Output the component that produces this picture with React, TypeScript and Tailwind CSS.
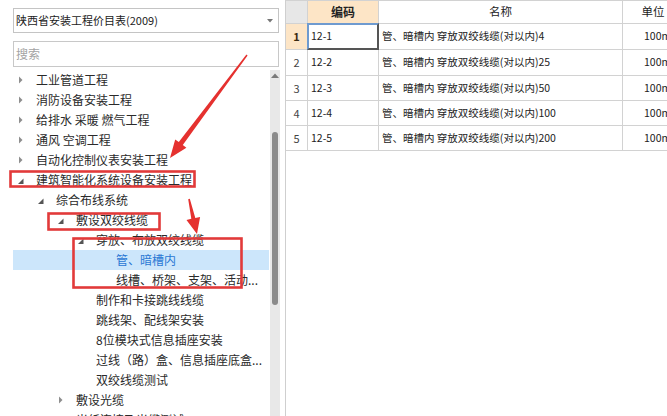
import React from "react";

type Node = {
  text: string;
  level: number;
  state: "collapsed" | "expanded" | "leaf";
  selected?: boolean;
};

const nodes: Node[] = [
  { text: "工业管道工程", level: 0, state: "collapsed" },
  { text: "消防设备安装工程", level: 0, state: "collapsed" },
  { text: "给排水 采暖 燃气工程", level: 0, state: "collapsed" },
  { text: "通风 空调工程", level: 0, state: "collapsed" },
  { text: "自动化控制仪表安装工程", level: 0, state: "collapsed" },
  { text: "建筑智能化系统设备安装工程", level: 0, state: "expanded" },
  { text: "综合布线系统", level: 1, state: "expanded" },
  { text: "敷设双绞线缆", level: 2, state: "expanded" },
  { text: "穿放、布放双绞线缆", level: 3, state: "expanded" },
  { text: "管、暗槽内", level: 4, state: "leaf", selected: true },
  { text: "线槽、桥架、支架、活动...", level: 4, state: "leaf" },
  { text: "制作和卡接跳线线缆", level: 3, state: "leaf" },
  { text: "跳线架、配线架安装", level: 3, state: "leaf" },
  { text: "8位模块式信息插座安装", level: 3, state: "leaf" },
  { text: "过线（路）盒、信息插座底盒...", level: 3, state: "leaf" },
  { text: "双绞线缆测试", level: 3, state: "leaf" },
  { text: "敷设光缆", level: 2, state: "collapsed" },
  { text: "光纤连接及光缆测试", level: 2, state: "leaf" },
];

const levelPad = ["pl-[3px]", "pl-[23px]", "pl-[43px]", "pl-[63px]", "pl-[83px]"];

function Arrow({ state }: { state: Node["state"] }) {
  if (state === "collapsed")
    return (
      <svg width="10" height="10" viewBox="0 0 10 10">
        <polygon points="3,1.5 6.5,5 3,8.5" fill="#8e8e8e" />
      </svg>
    );
  if (state === "expanded")
    return (
      <svg width="10" height="10" viewBox="0 0 10 10">
        <polygon points="7.5,3.5 7.5,9 2,9" fill="#555" />
      </svg>
    );
  return <span className="w-[10px]" />;
}

const rows = [
  { n: "1", code: "12-1", name: "管、暗槽内 穿放双绞线缆(对以内)4", h: "h-[26px]" },
  { n: "2", code: "12-2", name: "管、暗槽内 穿放双绞线缆(对以内)25", h: "h-[26px]" },
  { n: "3", code: "12-3", name: "管、暗槽内 穿放双绞线缆(对以内)50", h: "h-[25px]" },
  { n: "4", code: "12-4", name: "管、暗槽内 穿放双绞线缆(对以内)100", h: "h-[25px]" },
  { n: "5", code: "12-5", name: "管、暗槽内 穿放双绞线缆(对以内)200", h: "h-[25px]" },
];

export default function App() {
  return (
    <div className="relative w-[667px] h-[416px] overflow-hidden bg-white flex font-['Noto_Sans_CJK_SC',sans-serif] text-[#222]">
      {/* left panel */}
      <div className="w-[286px] h-full shrink-0 border-r border-[#cfcfcf] pl-[13px] pt-[8px] flex flex-col">
        <div className="w-[266px] h-[25px] border border-[#c4c4c4] flex items-center pl-[2px] pr-[5px] text-[11px] leading-none">
          <span className="flex-1">陕西省安装工程价目表(2009)</span>
          <svg width="6" height="4" viewBox="0 0 6 4">
            <polygon points="0,0 6,0 3,3.5" fill="#777" />
          </svg>
        </div>
        <div className="mt-[8px] w-[266px] h-[26px] border border-[#c8c8c8] flex items-center pl-[2px] text-[12px] leading-none text-[#a3a3a3]">
          搜索
        </div>
        <div className="mt-[3px] flex flex-1 min-h-0">
          <div className="w-[256px] flex flex-col overflow-hidden">
            {nodes.map((nd, i) => (
              <div
                key={i}
                className={`h-[20px] shrink-0 flex items-center text-[12px] leading-none whitespace-nowrap ${levelPad[nd.level]} ${
                  nd.selected ? "bg-[#cce6fb] text-[#2a78d4]" : "text-[#2a2a2a]"
                }`}
              >
                <span className="w-[10px] h-[10px] flex items-center justify-center">
                  <Arrow state={nd.state} />
                </span>
                <span className="ml-[10px]">{nd.text}</span>
              </div>
            ))}
          </div>
          <div className="ml-[1px] w-[10px] bg-[#e8e8e8] flex flex-col items-center">
            <svg className="mt-[3px]" width="8" height="5" viewBox="0 0 8 5">
              <polygon points="0,5 8,5 4,0.5" fill="#7a7a7a" />
            </svg>
            <div className="mt-[54px] w-[6px] h-[173px] rounded-[3px] bg-[#8b8b8b]" />
          </div>
        </div>
      </div>

      {/* grid */}
      <div className="flex-1 flex flex-col text-[10.5px] leading-none">
        <div className="flex h-[24px] border-t border-b border-[#d2d2d2] shrink-0">
          <div className="w-[22px] shrink-0 border-r border-[#d2d2d2] bg-[#e7e7e7]" />
          <div className="w-[71px] shrink-0 border-r border-[#d2d2d2] bg-[#fde5c6] flex items-center justify-center font-bold text-[12px]">
            编码
          </div>
          <div className="w-[244px] shrink-0 border-r border-[#d2d2d2] flex items-center justify-center text-[11.5px]">
            名称
          </div>
          <div className="w-[60px] shrink-0 flex items-center justify-center text-[11.5px]">单位</div>
        </div>
        {rows.map((r, i) => (
          <div key={r.n} className={`flex shrink-0 border-b border-[#d2d2d2] ${r.h}`}>
            <div
              className={`w-[22px] shrink-0 border-r border-[#d2d2d2] flex items-center justify-center text-[11px] ${
                i === 0 ? "bg-[#fde5c6] font-bold text-[#3a2a10]" : "text-[#444]"
              }`}
            >
              {r.n}
            </div>
            <div className="relative w-[71px] shrink-0 border-r border-[#d2d2d2] flex items-center pl-[3px]">
              {r.code}
              {i === 0 && (
                <span className="absolute top-[-1px] left-[-1px] right-[-1px] bottom-[-1px] border-2 border-t-[#6f9bd0] border-l-[#6f9bd0] border-r-[#555] border-b-[#555]" />
              )}
            </div>
            <div className="w-[244px] shrink-0 border-r border-[#d2d2d2] flex items-center pl-[3px] whitespace-nowrap overflow-hidden">
              {r.name}
            </div>
            <div className="w-[60px] shrink-0 flex items-center pl-[21px] whitespace-nowrap overflow-hidden">
              100m
            </div>
          </div>
        ))}
      </div>

      {/* red annotations */}
      <svg
        className="absolute left-0 top-0 pointer-events-none"
        width="667"
        height="416"
        viewBox="0 0 667 416"
      >
        <g fill="none" stroke="#e23a3a" strokeWidth="2.6">
          <rect x="10.5" y="171.5" width="184" height="15" />
          <rect x="48.5" y="213.5" width="111" height="16" />
          <rect x="73.5" y="238.5" width="168" height="49" />
        </g>
        <polygon
          points="170,158 186.4,147.8 182.8,145.1 247.6,55.5 246.4,54.5 178.8,142.1 175.2,139.4"
          fill="#e5312f"
        />
        <polygon
          points="197,234 200.1,216.9 195.3,218.0 189.8,198.8 188.2,199.2 191.3,218.8 186.5,219.9"
          fill="#e5312f"
        />
      </svg>
    </div>
  );
}
